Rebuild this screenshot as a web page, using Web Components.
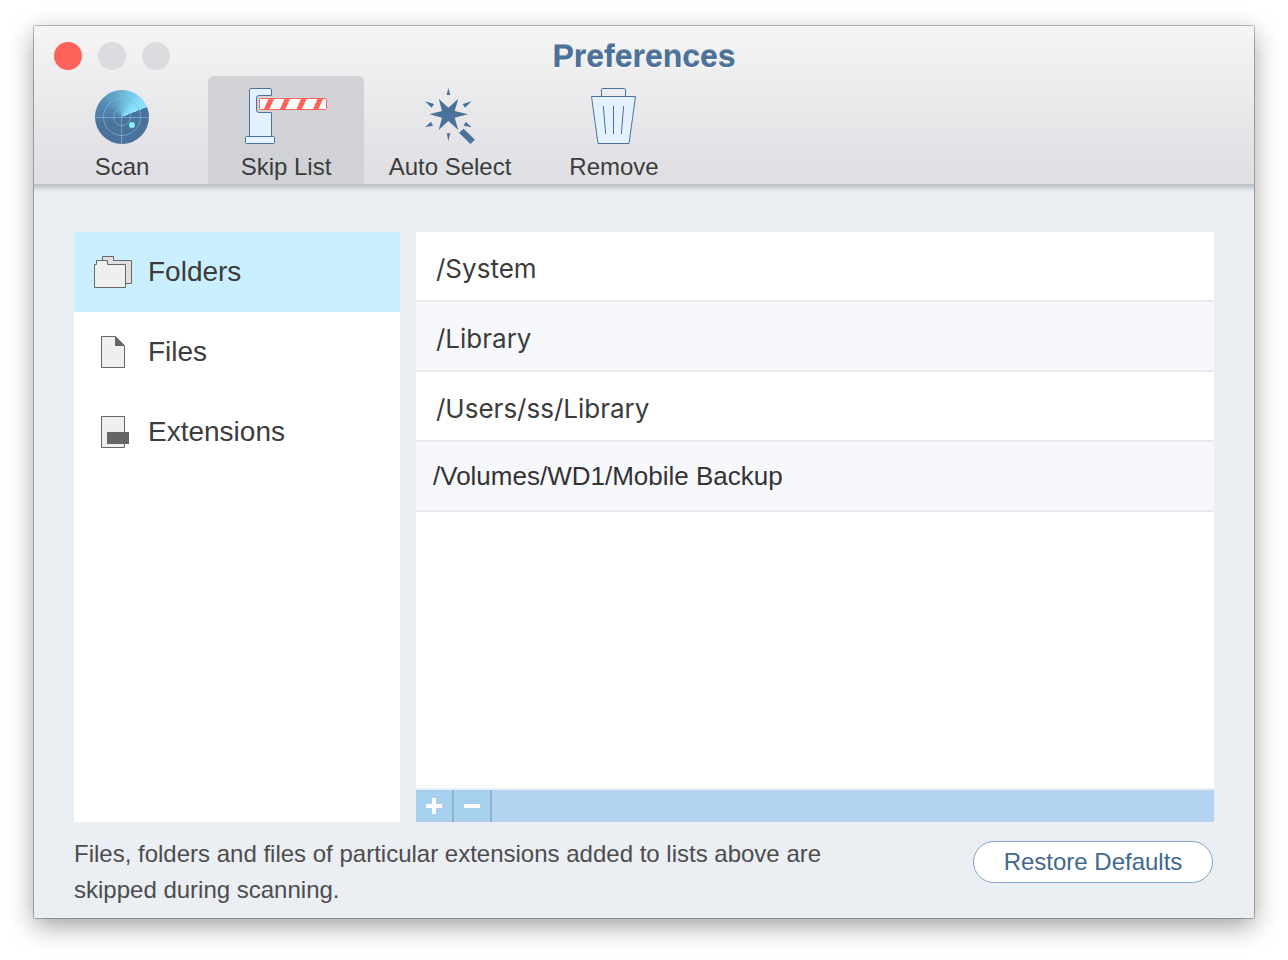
<!DOCTYPE html>
<html lang="en">
<head>
<meta charset="utf-8">
<title>Preferences</title>
<style>
  html { height: 100%; }
  body {
    margin: 0;
    min-height: 100%;
    box-sizing: border-box;
    padding: 26px 34px 42px;
    display: flex;
    background: #fff;
    color: #3c3c3c;
    font-family: "Liberation Sans", Arial, sans-serif;
  }
</style>
</head>
<body>
<pref-window>
  <pref-toolbar slot="toolbar" heading="Preferences">
    <tool-tab icon="scan">Scan</tool-tab>
    <tool-tab icon="gate" selected>Skip List</tool-tab>
    <tool-tab icon="wand">Auto Select</tool-tab>
    <tool-tab icon="trash">Remove</tool-tab>
  </pref-toolbar>
  <side-list slot="side">
    <side-item icon="folders" selected>Folders</side-item>
    <side-item icon="file">Files</side-item>
    <side-item icon="extension">Extensions</side-item>
  </side-list>
  <path-list slot="main">
    <path-row>/System</path-row>
    <path-row>/Library</path-row>
    <path-row>/Users/ss/Library</path-row>
    <path-row custom>/Volumes/WD1/Mobile Backup</path-row>
  </path-list>
  <pref-footer slot="footer">
    Files, folders and files of particular extensions added to lists above are skipped during scanning.
    <pill-button slot="action">Restore Defaults</pill-button>
  </pref-footer>
</pref-window>

<script>
const ICONS = {
  scan: `<div class="radar"><svg width="54" height="54" viewBox="0 0 54 54" fill="none" stroke="#78b5d8" stroke-opacity=".75">
      <circle cx="27" cy="27" r="8.5"/><circle cx="27" cy="27" r="18.5"/><path d="M0 27.5H54M26.5 0V54"/>
      <circle cx="37" cy="35" r="3" fill="#86eeff" stroke="none"/></svg></div>`,
  gate: `<svg width="84" height="56" viewBox="0 0 84 56" stroke="#4b729b" fill="#e4f2ff">
      <path d="M27.500 7.500V2Q27.500.5 26 .5H7Q5.500.5 5.500 2V48.500H27.500V24.500H15Q12.500 24.500 12.500 22V10Q12.500 7.500 15 7.500Z"/>
      <rect x="1.500" y="48.500" width="29" height="7" rx="1"/>
      <rect x="15.500" y="10.500" width="67" height="11" rx="1" fill="#fff" stroke="#ff6259"/>
      <path fill="#ff6259" stroke="none" d="M20 21L24.500 11H30L25.500 21ZM36 21L40.500 11H46L41.500 21ZM52.500 21L57 11H62.500L58 21ZM69 21L73.500 11H79L74.500 21Z"/></svg>`,
  wand: `<svg width="56" height="56" viewBox="36 24 168 168" fill="#4b729b">
      <path d="M58 103L96 93L86 56L115 83L145 56L134 93L174 103L134 113L145 150L115 123L86 150L96 113Z"/>
      <path d="M115 24L121 45H110ZM115 183L121 160H110ZM45 64L72 72L65 83ZM185 64L158 72L165 83ZM45 142L63 125L69 137ZM185 142L167 125L161 137Z"/>
      <path d="M161 146L195 179L181 192L147 158Z"/></svg>`,
  trash: `<svg width="48" height="56" viewBox="45 24 144 168" fill="none" stroke="#4b729b" stroke-width="3">
      <path d="M79.500 48V29Q79.500 25.500 83 25.500H148Q151.500 25.500 151.500 29V48"/>
      <path fill="#e4f2ff" d="M49.500 49.500H181.500L162 190.500H69Z"/><path d="M85 78L92 162M115.500 78V162M146 78L139 162"/></svg>`,
  folders: `<svg width="38" height="32" viewBox="72 93 114 96" stroke="#666" stroke-width="3">
      <path fill="#e0e0e0" d="M97.500 175.500V94.500H130.500V106.500H184.500V175.500Z"/>
      <path fill="#efefef" d="M73.500 187.500V118.500H79.500V106.500H112.500V118.500H166.500V187.500Z"/></svg>`,
  file: `<svg width="38" height="32" viewBox="72 333 114 96" stroke="#666" stroke-width="3">
      <path fill="#efefef" d="M94.500 334.500H136L163.500 362V427.500H94.500Z"/>
      <path fill="#666" stroke="none" d="M135 333L165 363H135Z"/></svg>`,
  extension: `<svg width="38" height="32" viewBox="72 573 114 96" stroke="#666" stroke-width="3">
      <path fill="#efefef" d="M94.500 574.500H163.500V667.500H94.500Z"/>
      <path fill="#666" stroke="none" d="M111 621H177V657H111Z"/></svg>`
};

function define(name, markup, setup) {
  const template = document.createElement('template');
  template.innerHTML = markup;
  customElements.define(name, class extends HTMLElement {
    constructor() {
      super();
      this.attachShadow({ mode: 'open' }).append(template.content.cloneNode(true));
    }
    connectedCallback() { if (setup) setup(this, this.shadowRoot); }
  });
}

define('pref-icon', `
  <style>
    :host { display: flex; align-items: flex-end; justify-content: center; flex: none; }
    svg { display: block; overflow: visible; }
    .radar {
      border-radius: 50%; overflow: hidden;
      background: conic-gradient(from 68deg, #4b729b 0 52%, #558bb3 66%, #69b5d6 81%, #83dcf8 93%, #88e6ff 100%);
    }
  </style>
  <span></span>`,
  (host, root) => { root.querySelector('span').innerHTML = ICONS[host.getAttribute('name')]; });

define('pref-window', `
  <style>
    :host {
      flex: 1; min-width: 0; display: flex; flex-direction: column;
      background: #ebeef3; border-radius: 1px;
      box-shadow: 0 0 0 1px rgba(0,0,0,.25), 0 8px 26px rgba(0,0,0,.38);
    }
    main {
      flex: 1; display: flex; flex-direction: column; padding: 48px 40px 10px;
      background: linear-gradient(#bdc4ca, #c0c6cc 2px, #dce1e6 5px, #ebeef3 9px);
    }
    .panes { flex: 1; display: grid; grid-template-columns: 326px minmax(0, 1fr); gap: 16px; }
  </style>
  <slot name="toolbar"></slot>
  <main>
    <div class="panes"><slot name="side"></slot><slot name="main"></slot></div>
    <slot name="footer"></slot>
  </main>`);

define('pref-toolbar', `
  <style>
    :host { display: block; background: linear-gradient(#f5f5f5, #dedee3); }
    header { display: grid; grid-template-columns: 1fr auto 1fr; align-items: center; height: 50px; padding: 0 20px; }
    .lights { display: flex; gap: 16px; padding-top: 10px; }
    .lights button { width: 28px; height: 28px; padding: 0; border: 0; border-radius: 50%; background: #dcdce0; }
    .lights .close { background: #ff6259; }
    h1 {
      margin: 0; padding-top: 10px; font-size: 32px; line-height: 40px; color: #4b729b;
      text-shadow: 0 -1px 0 rgba(58,88,120,.5), 0 1px 1px #fff;
    }
    nav { display: flex; gap: 8px; padding: 0 10px; }
  </style>
  <header>
    <div class="lights">
      <button class="close" aria-label="Close"></button>
      <button aria-label="Minimize" disabled></button>
      <button aria-label="Zoom" disabled></button>
    </div>
    <h1></h1>
  </header>
  <nav><slot></slot></nav>`,
  (host, root) => { root.querySelector('h1').textContent = host.getAttribute('heading'); });

define('tool-tab', `
  <style>
    :host { display: block; width: 156px; }
    button {
      display: flex; flex-direction: column; align-items: center; gap: 8px;
      width: 100%; height: 108px; padding: 12px 0 0; border: 0; border-radius: 6px 6px 0 0;
      background: none; color: inherit; font: 24px/30px "Liberation Sans", Arial, sans-serif; white-space: nowrap;
    }
    :host([selected]) button { background: #d1d2d5; }
    pref-icon { height: 56px; }
  </style>
  <button><pref-icon></pref-icon><span><slot></slot></span></button>`,
  (host, root) => root.querySelector('pref-icon').replaceWith(makeIcon(host)));

define('side-list', `
  <style>:host { display: block; background: #fff; }</style>
  <nav><slot></slot></nav>`);

define('side-item', `
  <style>
    :host { display: block; }
    button {
      display: flex; align-items: center; gap: 16px; width: 100%; height: 80px; padding: 0 20px;
      border: 0; background: none; color: inherit; font: 28px/32px "Liberation Sans", Arial, sans-serif;
    }
    :host([selected]) button { background: #caefff; }
  </style>
  <button><pref-icon></pref-icon><span><slot></slot></span></button>`,
  (host, root) => root.querySelector('pref-icon').replaceWith(makeIcon(host)));

function makeIcon(host) {
  const icon = document.createElement('pref-icon');
  icon.setAttribute('name', host.getAttribute('icon'));
  return icon;
}

define('path-list', `
  <style>
    :host { display: flex; flex-direction: column; background: #fff; }
    .rows { flex: 1; }
    .bar { display: flex; height: 32px; border-top: 2px solid #ebeef3; background: #b4d3f0; }
    button {
      display: grid; place-items: center; box-sizing: border-box; width: 38px; padding: 0;
      border: 0; border-right: 2px solid #8ab4d0; background: #a6d0ee;
    }
    svg { display: block; }
  </style>
  <div class="rows" role="list"><slot></slot></div>
  <div class="bar">
    <button aria-label="Add"><svg width="16" height="16" fill="#fff"><path d="M6 0h4v6h6v4h-6v6H6v-6H0V6h6z"/></svg></button>
    <button aria-label="Remove"><svg width="16" height="16" fill="#fff"><path d="M0 6h16v4H0z"/></svg></button>
  </div>`);

define('path-row', `
  <style>
    :host {
      display: flex; align-items: center; box-sizing: border-box; height: 70px; padding: 6px 20px 0;
      border-bottom: 2px solid #e9ebef; font: 26px/32px Inter, "Liberation Sans", sans-serif;
    }
    :host(:nth-child(even)) { background: #f7f8fc; }
    :host([custom]) { padding: 0 17px; color: #333; font-family: "Liberation Sans", Arial, sans-serif; }
  </style>
  <slot></slot>`,
  host => host.setAttribute('role', 'listitem'));

define('pref-footer', `
  <style>
    :host { display: flex; align-items: flex-start; justify-content: space-between; gap: 24px; margin-top: 14px; }
    p { margin: 0; max-width: 800px; font-size: 24px; line-height: 36px; color: #4d4d4d; }
  </style>
  <p><slot></slot></p>
  <slot name="action"></slot>`);

define('pill-button', `
  <style>
    :host { display: block; flex: none; padding: 5px 1px 0 0; }
    button {
      display: block; width: 240px; height: 42px; padding: 0; border: 1px solid #84a6c8; border-radius: 21px;
      background: #fff; color: #41688f; font: 24px/30px "Liberation Sans", Arial, sans-serif;
    }
  </style>
  <button><slot></slot></button>`);
</script>
</body>
</html>
